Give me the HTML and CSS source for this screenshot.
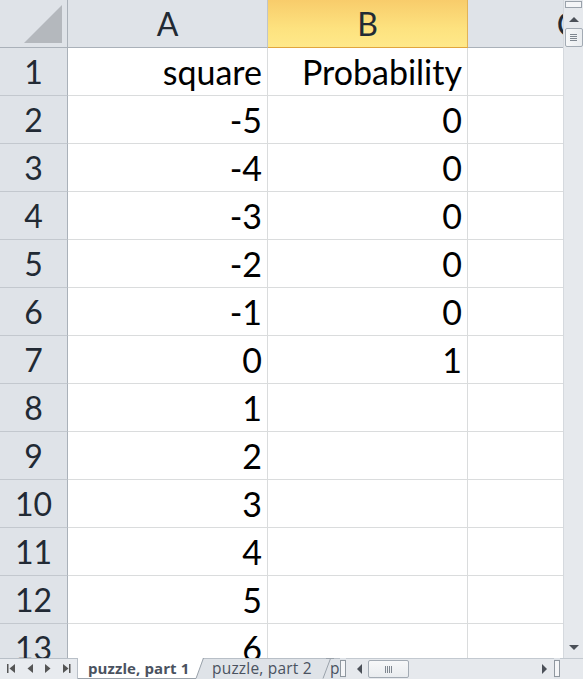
FILE: index.html
```html
<!DOCTYPE html>
<html>
<head>
<meta charset="utf-8">
<link rel="stylesheet" href="styles.css">
</head>
<body>
<div class="app">
  <div class="main">
    <div class="sheet">
      <div class="corner"><div class="tri"></div></div>
      <div class="ch">A</div>
      <div class="ch sel">B</div>
      <div class="ch">C</div>

      <div class="rh">1</div><div class="c">square</div><div class="c">Probability</div><div class="c"></div>
      <div class="rh">2</div><div class="c">-5</div><div class="c">0</div><div class="c"></div>
      <div class="rh">3</div><div class="c">-4</div><div class="c">0</div><div class="c"></div>
      <div class="rh">4</div><div class="c">-3</div><div class="c">0</div><div class="c"></div>
      <div class="rh">5</div><div class="c">-2</div><div class="c">0</div><div class="c"></div>
      <div class="rh">6</div><div class="c">-1</div><div class="c">0</div><div class="c"></div>
      <div class="rh">7</div><div class="c">0</div><div class="c">1</div><div class="c"></div>
      <div class="rh">8</div><div class="c">1</div><div class="c"></div><div class="c"></div>
      <div class="rh">9</div><div class="c">2</div><div class="c"></div><div class="c"></div>
      <div class="rh">10</div><div class="c">3</div><div class="c"></div><div class="c"></div>
      <div class="rh">11</div><div class="c">4</div><div class="c"></div><div class="c"></div>
      <div class="rh">12</div><div class="c">5</div><div class="c"></div><div class="c"></div>
      <div class="rh">13</div><div class="c">6</div><div class="c"></div><div class="c"></div>
    </div>
    <div class="vscroll">
      <div class="vsplit"></div>
      <div class="varrow up"></div>
      <div class="vthumb"><span></span><span></span><span></span><span></span></div>
      <div class="vtrack"></div>
      <div class="varrow down"></div>
    </div>
  </div>
  <div class="bottom">
    <div class="nav">
      <svg width="78" height="21" viewBox="0 0 78 21">
        <rect x="7" y="6" width="1.5" height="9" fill="#555"/>
        <polygon points="15,6 15,15 9.5,10.5" fill="#555"/>
        <polygon points="33,6 33,15 27.5,10.5" fill="#555"/>
        <polygon points="45,6 45,15 50.5,10.5" fill="#555"/>
        <polygon points="63,6 63,15 68.5,10.5" fill="#555"/>
        <rect x="69" y="6" width="1.5" height="9" fill="#555"/>
      </svg>
    </div>
    <div class="tabs">
      <svg class="tabshape" width="262" height="21" viewBox="0 0 262 21">
        <path d="M248 0.5 L256 0.5 M252.5 0.5 L245 20.5" fill="none" stroke="#9aa2ab"/>
        <polygon points="0,0 125,0 118,21 0,21" fill="#ffffff"/>
        <path d="M125.5 0 L118 20.5 L0 20.5" fill="none" stroke="#9aa2ab"/>
      </svg>
      <div class="tab active">puzzle, part 1</div>
      <div class="tab second">puzzle, part 2</div>
      <div class="tab last">p</div>
    </div>
    <div class="hsplit"></div>
    <div class="hscroll">
      <div class="harrow left"></div>
      <div class="hthumb"><span></span><span></span><span></span><span></span></div>
      <div class="htrack"></div>
      <div class="harrow right"></div>
    </div>
    <div class="hsplit2"></div>
    <div class="cornerbox"></div>
  </div>
</div>
</body>
</html>
```

FILE: styles.css
```css
html, body {
  margin: 0;
  padding: 0;
  background: #ffffff;
}
.app {
  width: 583px;
  height: 679px;
  display: flex;
  flex-direction: column;
  overflow: hidden;
}
.main {
  height: 658px;
  display: flex;
  flex-direction: row;
}
.sheet {
  width: 563px;
  height: 658px;
  overflow: hidden;
  display: grid;
  grid-template-columns: 68px 200px 200px 200px;
  grid-auto-rows: 48px;
  font-family: Lato, "Open Sans", sans-serif;
}
.sheet > div {
  box-sizing: border-box;
}
.corner {
  background: #dfe3e8;
  border-right: 1px solid #aab1b9;
  border-bottom: 1px solid #aab1b9;
  position: relative;
}
.tri {
  position: absolute;
  right: 5px;
  bottom: 4px;
  width: 0;
  height: 0;
  border-left: 38px solid transparent;
  border-bottom: 38px solid #b4b8bd;
}
.ch {
  background: #dfe3e8;
  border-right: 1px solid #bfc5cc;
  border-bottom: 1px solid #aab1b9;
  color: #222a34;
  font-size: 32px;
  text-align: center;
  line-height: 47px;
}
.ch.sel {
  background: linear-gradient(#f8cc6b, #fde27f 60%, #ffe98a);
  border-right: 1px solid #e2b357;
  border-bottom: 1px solid #e1a53e;
}
.rh {
  background: #dfe3e8;
  border-right: 1px solid #aab1b9;
  border-bottom: 1px solid #c3c8ce;
  color: #222a34;
  font-size: 32px;
  text-align: center;
  line-height: 48px;
}
.c {
  border-right: 1px solid #dadcdd;
  border-bottom: 1px solid #dadcdd;
  color: #000;
  font-size: 34px;
  text-align: right;
  padding-right: 5px;
  line-height: 48px;
}
.vscroll {
  width: 20px;
  height: 658px;
  background: #e6e9ed;
  border-left: 1px solid #d5d9de;
  box-sizing: border-box;
  display: flex;
  flex-direction: column;
  align-items: center;
}
.vsplit {
  width: 17px;
  height: 7px;
  margin-top: 1px;
  border: 1px solid #9aa2ab;
  background: #f4f5f7;
  box-sizing: border-box;
}
.varrow {
  width: 0;
  height: 0;
  border-left: 5px solid transparent;
  border-right: 5px solid transparent;
}
.varrow.up {
  margin-top: 9px;
  border-bottom: 5px solid #4b5058;
}
.varrow.down {
  margin-bottom: 8px;
  border-top: 5px solid #4b5058;
}
.vthumb {
  margin-top: 6px;
  width: 18px;
  height: 19px;
  border: 1px solid #a3abb4;
  border-radius: 2px;
  background: linear-gradient(90deg, #f7f8f9, #e9ecef);
  box-sizing: border-box;
  display: flex;
  flex-direction: column;
  align-items: center;
  justify-content: center;
  gap: 1px;
}
.vthumb span {
  width: 7px;
  height: 1px;
  background: #7f8790;
}
.vtrack {
  flex: 1;
}
.bottom {
  height: 21px;
  display: flex;
  flex-direction: row;
  background: #dfe3e8;
}
.nav {
  width: 78px;
  height: 21px;
  background: #e8ebef;
  border-top: 1px solid #b8bfc7;
  border-right: 1px solid #b8bfc7;
  box-sizing: border-box;
}
.nav svg {
  display: block;
  margin-top: -1px;
}
.tabs {
  width: 262px;
  height: 21px;
  display: flex;
  position: relative;
  font-family: "Open Sans", "DejaVu Sans", sans-serif;
  font-size: 15px;
  line-height: 21px;
  color: #4a5260;
  background: #dfe3e8;
  box-shadow: inset 0 1px 0 #b8bfc7;
  overflow: hidden;
}
.tabshape {
  position: absolute;
  left: 0;
  top: 0;
}
.tab {
  height: 21px;
  white-space: nowrap;
  position: relative;
  box-sizing: border-box;
  flex: none;
}
.tab.active {
  font-weight: 700;
  padding-left: 10px;
  width: 118px;
  color: #4a5260;
  letter-spacing: 0.1px;
}
.tab.second {
  padding-left: 16px;
  width: 126px;
  font-size: 15.5px;
  letter-spacing: 0.2px;
}
.tab.last {
  padding-left: 8px;
  font-size: 15.5px;
}
.hsplit {
  width: 6px;
  height: 17px;
  margin-top: 2px;
  border: 1px solid #8f979f;
  background: #f4f5f7;
  box-sizing: border-box;
  flex: none;
}
.hscroll {
  width: 208px;
  height: 21px;
  display: flex;
  align-items: center;
  border-top: 1px solid #c3c9d0;
  box-sizing: border-box;
  background: #e6e9ed;
  flex: none;
}
.harrow {
  width: 0;
  height: 0;
  border-top: 5px solid transparent;
  border-bottom: 5px solid transparent;
}
.harrow.left {
  margin-left: 11px;
  border-right: 5px solid #4b5058;
}
.harrow.right {
  margin-right: 7px;
  border-left: 5px solid #4b5058;
}
.hthumb {
  margin-left: 6px;
  width: 41px;
  height: 18px;
  border: 1px solid #a3abb4;
  border-radius: 2px;
  background: linear-gradient(#f7f8f9, #e9ecef);
  box-sizing: border-box;
  display: flex;
  align-items: center;
  justify-content: center;
  gap: 1px;
}
.hthumb span {
  width: 1px;
  height: 7px;
  background: #7f8790;
}
.htrack {
  flex: 1;
}
.hsplit2 {
  width: 6px;
  height: 17px;
  margin-top: 2px;
  border: 1px solid #8f979f;
  background: #f4f5f7;
  box-sizing: border-box;
  flex: none;
}
.cornerbox {
  flex: 1;
  background: #e6e9ed;
  border-top: 1px solid #c3c9d0;
}
```
